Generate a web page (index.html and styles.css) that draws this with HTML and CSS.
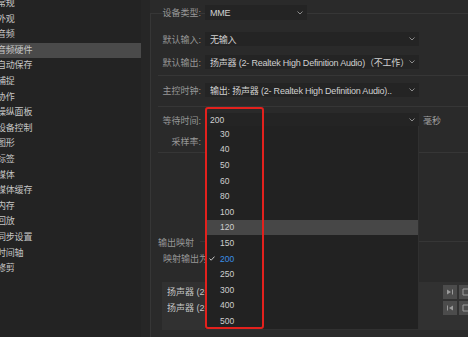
FILE: index.html
```html
<!DOCTYPE html>
<html lang="zh">
<head>
    <meta charset="UTF-8">
    <meta name="viewport" content="width=device-width, initial-scale=1.0">
    <title>首选项 - 音频硬件</title>
    <link rel="stylesheet" href="styles.css">
</head>
<body>
    <div class="app">
        <!-- Preference categories -->
        <nav class="sidebar">
            <ul class="nav-list">
                <li>常规</li>
                <li>外观</li>
                <li>音频</li>
                <li class="active">音频硬件</li>
                <li>自动保存</li>
                <li>捕捉</li>
                <li>协作</li>
                <li>操纵面板</li>
                <li>设备控制</li>
                <li>图形</li>
                <li>标签</li>
                <li>媒体</li>
                <li>媒体缓存</li>
                <li>内存</li>
                <li>回放</li>
                <li>同步设置</li>
                <li>时间轴</li>
                <li>修剪</li>
            </ul>
        </nav>
        <div class="gutter"></div>

        <!-- Audio hardware settings -->
        <main class="panel">
            <div class="frame">
                <div class="field field-device">
                    <span class="label">设备类型:</span>
                    <div class="select select-short">
                        <span class="value">MME</span>
                        <svg class="chevron" width="6" height="4" viewBox="0 0 6 4"><polyline points="0.5,0.5 3,3 5.5,0.5" /></svg>
                    </div>
                </div>

                <div class="field field-input">
                    <span class="label">默认输入:</span>
                    <div class="select">
                        <span class="value">无输入</span>
                        <svg class="chevron" width="6" height="4" viewBox="0 0 6 4"><polyline points="0.5,0.5 3,3 5.5,0.5" /></svg>
                    </div>
                </div>

                <div class="field field-output">
                    <span class="label">默认输出:</span>
                    <div class="select">
                        <span class="value">扬声器 (2- Realtek High Definition Audio)（不工作）</span>
                        <svg class="chevron" width="6" height="4" viewBox="0 0 6 4"><polyline points="0.5,0.5 3,3 5.5,0.5" /></svg>
                    </div>
                </div>

                <div class="separator sep-1"></div>

                <div class="field field-clock">
                    <span class="label">主控时钟:</span>
                    <div class="select">
                        <span class="value">输出: 扬声器 (2- Realtek High Definition Audio)..</span>
                        <svg class="chevron" width="6" height="4" viewBox="0 0 6 4"><polyline points="0.5,0.5 3,3 5.5,0.5" /></svg>
                    </div>
                </div>

                <div class="separator sep-2"></div>

                <div class="field field-latency">
                    <span class="label">等待时间:</span>
                    <div class="select select-open">
                        <span class="value value-num">200</span>
                        <svg class="chevron" width="6" height="4" viewBox="0 0 6 4"><polyline points="0.5,0.5 3,3 5.5,0.5" /></svg>

                        <!-- Open dropdown list -->
                        <ul class="dropdown">
                            <li><span class="check"></span>30</li>
                            <li><span class="check"></span>40</li>
                            <li><span class="check"></span>50</li>
                            <li><span class="check"></span>60</li>
                            <li><span class="check"></span>80</li>
                            <li><span class="check"></span>100</li>
                            <li class="hover"><span class="check"></span>120</li>
                            <li><span class="check"></span>150</li>
                            <li class="selected"><span class="check"><svg width="6" height="5" viewBox="0 0 6 5"><polyline points="0.5,2.6 2.2,4.2 5.5,0.6" /></svg></span>200</li>
                            <li><span class="check"></span>250</li>
                            <li><span class="check"></span>300</li>
                            <li><span class="check"></span>400</li>
                            <li><span class="check"></span>500</li>
                        </ul>
                    </div>
                    <span class="unit">毫秒</span>
                </div>

                <div class="field field-rate">
                    <span class="label">采样率:</span>
                </div>

                <div class="separator sep-3"></div>

                <div class="section-title">
                    <span>输出映射</span>
                    <span class="title-line"></span>
                </div>

                <div class="map-target">映射输出为:</div>

                <div class="map-box">
                    <div class="map-rows">
                        <div class="map-row">扬声器 (2- Realtek) 1</div>
                        <div class="map-row">扬声器 (2- Realtek) 2</div>
                    </div>
                    <div class="map-buttons">
                        <button class="map-btn">
                            <svg width="8" height="6" viewBox="0 0 8 6"><polygon points="1,0.5 5,3 1,5.5" /><rect x="6" y="0.5" width="1" height="5" /></svg>
                        </button>
                        <button class="map-btn">
                            <svg width="8" height="8" viewBox="0 0 8 8"><path d="M1 1h6v6H1z" /></svg>
                        </button>
                        <button class="map-btn">
                            <svg width="8" height="6" viewBox="0 0 8 6"><rect x="1" y="0.5" width="1" height="5" /><polygon points="7,0.5 3,3 7,5.5" /></svg>
                        </button>
                        <button class="map-btn">
                            <svg width="8" height="8" viewBox="0 0 8 8"><path d="M1 1h6v6H1z" /></svg>
                        </button>
                    </div>
                </div>
            </div>

            <!-- Red highlight drawn over the latency list -->
            <div class="annotation"></div>
        </main>
    </div>
</body>
</html>
```

FILE: styles.css
```css
body {
    margin: 0;
    width: 468px;
    height: 337px;
    overflow: hidden;
    background-color: #2a2a2a;
    font-family: "Liberation Sans", "Noto Sans CJK SC", sans-serif;
    font-size: 9px;
    color: #c6c6c6;
}
.app {
    display: flex;
    height: 337px;
}

/* sidebar */
.sidebar {
    width: 141px;
    flex: none;
    background-color: #232323;
    overflow: hidden;
}
.nav-list {
    list-style: none;
    margin: -4px 0 0;
    padding: 0;
}
.nav-list li {
    height: 15.6px;
    line-height: 15.6px;
    text-indent: -3px;
    white-space: nowrap;
    letter-spacing: -0.2px;
}
.nav-list li.active {
    background-color: #4a4a4a;
}
.gutter {
    width: 9px;
    flex: none;
    background-color: #262626;
}

/* main panel */
.panel {
    flex: 1;
    position: relative;
    padding-top: 13px;
    overflow: hidden;
}
.frame {
    border-top: 1px solid #363636;
    border-left: 1px solid #363636;
    height: 323px;
}
.field {
    display: flex;
    align-items: center;
    height: 14px;
}
.label {
    width: 50px;
    flex: none;
    margin-right: 4px;
    text-align: right;
    color: #979797;
    white-space: nowrap;
}
.select {
    width: 214px;
    height: 14px;
    flex: none;
    display: flex;
    align-items: center;
    box-sizing: border-box;
    padding: 0 4px 0 5px;
    background-color: #242424;
    color: #d0d0d0;
    font-size: 9px;
    letter-spacing: -0.2px;
    position: relative;
}
.select .value {
    flex: 1;
    overflow: hidden;
    white-space: nowrap;
}
.value-num {
    font-size: 8.5px;
    letter-spacing: 0;
}
.chevron {
    flex: none;
    margin-left: 3px;
    fill: none;
    stroke: #8c8c8c;
    stroke-width: 1;
}
.select-short {
    width: 102px;
    height: 15px;
}
.field-device {
    height: 15px;
    margin-top: -9px;
}
.field-input {
    margin-top: 12px;
}
.field-output {
    margin-top: 9px;
}
.field-clock {
    margin-top: 7px;
}
.field-latency {
    margin-top: 6px;
}
.field-rate {
    margin-top: 7px;
}
.unit {
    margin-left: 4px;
    color: #a0a0a0;
}
.separator {
    height: 1px;
    margin-left: 7px;
    background-color: #363636;
}
.sep-1 {
    margin-top: 6px;
}
.sep-2 {
    margin-top: 9px;
}
.sep-3 {
    margin-top: 4px;
}

/* dropdown list */
.dropdown {
    position: absolute;
    left: 0;
    top: 13px;
    width: 214px;
    margin: 0;
    padding: 0;
    list-style: none;
    background-color: #222222;
    border-right: 1px solid #303030;
    box-sizing: border-box;
    font-size: 8.5px;
    letter-spacing: 0;
    color: #cfcfcf;
    z-index: 2;
}
.dropdown li {
    display: flex;
    align-items: center;
    height: 15.6px;
}
.dropdown .check {
    width: 15px;
    flex: none;
    display: flex;
    justify-content: center;
}
.dropdown .check svg {
    fill: none;
    stroke: #c8c8c8;
    stroke-width: 1;
    margin-left: -2px;
}
.dropdown li.hover {
    background-color: #474747;
}
.dropdown li.selected {
    color: #3a8ee6;
}

/* output mapping */
.section-title {
    display: flex;
    align-items: center;
    height: 14px;
    margin-top: 82px;
    padding-left: 7px;
    color: #979797;
}
.title-line {
    flex: 1;
    height: 1px;
    margin-left: 6px;
    margin-top: -1px;
    background-color: #363636;
}
.map-target {
    height: 14px;
    line-height: 14px;
    margin-top: 3px;
    padding-left: 12px;
    color: #979797;
}
.map-box {
    display: flex;
    height: 48px;
    margin-top: 16px;
    margin-left: 11px;
    background-color: #313131;
}
.map-rows {
    width: 281px;
    flex: none;
    padding-top: 3px;
    padding-left: 5px;
    box-sizing: border-box;
}
.map-row {
    height: 15.6px;
    line-height: 15.6px;
    white-space: nowrap;
    overflow: hidden;
    color: #c4c4c4;
}
.map-buttons {
    display: grid;
    grid-template-columns: 14px 14px;
    grid-auto-rows: 14px;
    gap: 2px;
    padding-top: 3px;
}
.map-btn {
    display: flex;
    align-items: center;
    justify-content: center;
    padding: 0;
    border: none;
    background-color: #4c4c4c;
}
.map-btn svg {
    fill: #9a9a9a;
}
.map-btn svg path {
    fill: none;
    stroke: #9a9a9a;
    stroke-width: 1;
}

/* red highlight */
.annotation {
    position: absolute;
    left: 55px;
    top: 107px;
    width: 59px;
    height: 222px;
    box-sizing: border-box;
    border: 2px solid #e3211d;
    border-radius: 3px;
    z-index: 3;
}
```
